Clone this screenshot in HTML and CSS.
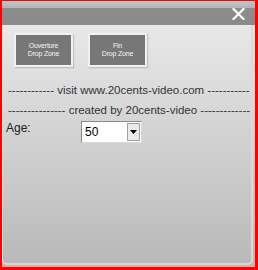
FILE: index.html
```html
<!DOCTYPE html>
<html>
<head>
<meta charset="utf-8">
<link rel="stylesheet" href="styles.css">
</head>
<body>
<div class="window">
  <div class="titlebar">
    <svg class="close" width="13" height="12" viewBox="0 0 13 12"><path d="M1.5 1 L11.5 11 M11.5 1 L1.5 11" stroke="#fff" stroke-width="2.2" stroke-linecap="square"/></svg>
  </div>
  <div class="body">
    <div class="panel">
      <div class="buttons">
        <div class="btn">Ouverture<br>Drop Zone</div>
        <div class="btn">Fin<br>Drop Zone</div>
      </div>
      <div class="line first">------------ visit www.20cents-video.com -----------</div>
      <div class="line">--------------- created by 20cents-video -------------</div>
      <div class="age-row">
        <span class="label">Age:</span>
        <div class="select">
          <span class="value">50</span>
          <span class="arrow"><svg width="7" height="4" viewBox="0 0 7 4"><path d="M0 0 H7 L3.5 4 Z" fill="#000"/></svg></span>
        </div>
      </div>
    </div>
  </div>
</div>
</body>
</html>
```
FILE: styles.css
```css
html, body { margin: 0; padding: 0; }
body { width: 258px; height: 270px; overflow: hidden; font-family: "Liberation Sans", Arial, sans-serif; }
.window {
  box-sizing: border-box;
  width: 258px; height: 270px;
  border-style: solid; border-color: #f00;
  border-width: 1px 3px 3px 2px;
  display: flex; flex-direction: column;
  background: #bcbcbc;
}
.titlebar {
  height: 24px; flex: none;
  background: linear-gradient(#c4c4c4 0, #b4b4b4 7px, #8d8d8d 7px, #8a8a8a 24px);
  display: flex; justify-content: flex-end; align-items: flex-start;
  padding-right: 10px;
}
.close { margin-top: 7px; }
.body {
  flex: 1;
  background: linear-gradient(#e8e8e8, #b8b8b8);
  padding: 0 2px 2px 0;
  display: flex;
}
.panel {
  flex: 1;
  border-left: 1px solid #eeeeee;
  border-right: 2px solid #dadada;
  border-bottom: 2px solid #d8d8d8;
  border-radius: 0 0 5px 5px;
}
.buttons { display: flex; gap: 15px; padding: 8px 0 0 11px; }
.btn {
  box-sizing: border-box;
  width: 59px; height: 34px;
  background: #777;
  border: 2px solid #f2f2f2;
  box-shadow: 1px 1px 1px rgba(0,0,0,0.15);
  color: #f4f4f4;
  font-size: 7px; line-height: 8px;
  text-align: center;
  display: flex; align-items: center; justify-content: center;
  letter-spacing: -0.2px;
}
.line {
  font-size: 11.5px; line-height: 20px;
  color: #333;
  white-space: nowrap;
  padding-left: 5px;
}
.line.first { margin-top: 13px; }
.age-row { display: flex; align-items: center; margin-top: 1px; }
.label { font-size: 12px; color: #222; padding-left: 3px; width: 75px; margin-top: -9px; }
.select {
  box-sizing: border-box;
  width: 61px; height: 22px;
  display: flex; align-items: center;
  background: #fff;
  border: 1px solid;
  border-color: #8a8a8a #d8d8d8 #d8d8d8 #8a8a8a;
}
.value { flex: 1; font-size: 12px; padding-left: 3px; color: #000; }
.arrow {
  box-sizing: border-box;
  width: 13px; height: 18px; margin-right: 1px;
  background: #eaeaea;
  border: 1px solid #a0a0a0;
  display: flex; align-items: center; justify-content: center;
}
```
